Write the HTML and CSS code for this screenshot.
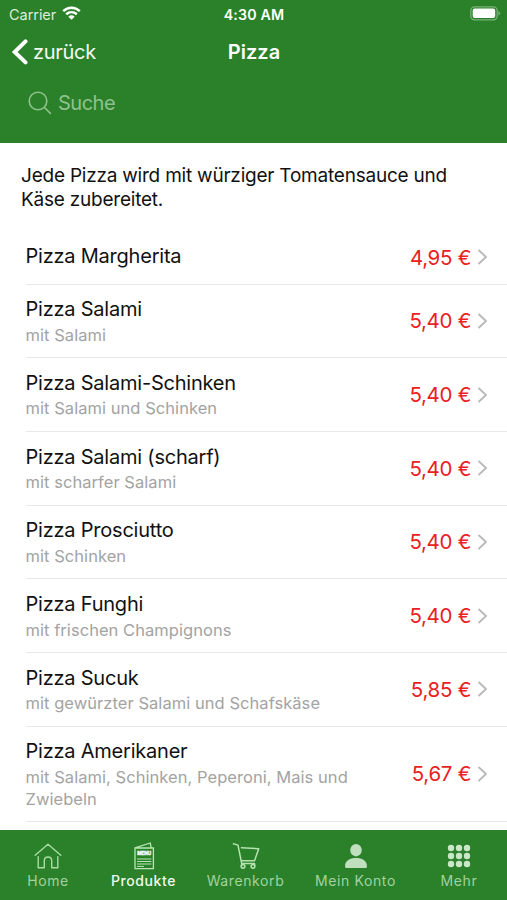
FILE: index.html
```html
<!DOCTYPE html>
<html lang="de">
<head>
<meta charset="utf-8">
<meta name="viewport" content="width=device-width, initial-scale=1">
<title>Pizza</title>
<link rel="stylesheet" href="styles.css">
</head>
<body>
<div class="app">
  <header class="header">
    <div class="status">
      <div class="carrier"><span>Carrier</span>
        <svg class="wifi" width="19" height="14" viewBox="0 0 19 14" fill="none" stroke="#fff" stroke-width="2.5"><path d="M1.2 5.2C6 .6 13 .6 17.8 5.2M4.2 8.3C7.4 5.4 11.6 5.4 14.8 8.3"/><path d="M9.5 13.8 6.3 10.7Q9.5 8 12.7 10.7Z" fill="#fff" stroke="none"/></svg>
      </div>
      <div class="clock">4:30 AM</div>
      <svg class="battery" width="31" height="15" viewBox="0 0 31 15"><rect x=".8" y=".8" width="26.4" height="13" rx="3.8" fill="none" stroke="#79b178" stroke-width="1.3"/><rect x="2.7" y="2.6" width="22.5" height="9.4" rx="2" fill="#fff"/><path d="M28.4 5v4.6q1.7-.8 1.7-2.3t-1.7-2.3" fill="#79b178"/></svg>
    </div>
    <div class="nav">
      <div class="back">
        <svg width="17" height="26" viewBox="0 0 17 26" fill="none" stroke="#fff" stroke-width="4" stroke-linecap="round"><path d="M14.5 2.4 3.7 13 14.5 23.4"/></svg>
        <span>zurück</span>
      </div>
      <h1 class="title">Pizza</h1>
    </div>
    <div class="search">
      <svg width="24" height="24" viewBox="0 0 24 24" fill="none" stroke="#8fc18e" stroke-width="1.6" stroke-linecap="round"><circle cx="10" cy="10" r="8.8"/><path d="m16.4 16.5 6 5.9"/></svg>
      <span>Suche</span>
    </div>
  </header>
  <main class="content">
    <p class="intro">Jede Pizza wird mit würziger Tomatensauce und Käse zubereitet.</p>
    <ul class="list">
      <li class="row plain"><div><div class="name">Pizza Margherita</div></div><div class="price">4,95 €</div><svg class="chevron" viewBox="0 0 10 16"><path d="m1 1 7.5 7L1 15"/></svg></li>
      <li class="row"><div><div class="name">Pizza Salami</div><div class="desc">mit Salami</div></div><div class="price">5,40 €</div><svg class="chevron" viewBox="0 0 10 16"><path d="m1 1 7.5 7L1 15"/></svg></li>
      <li class="row"><div><div class="name">Pizza Salami-Schinken</div><div class="desc">mit Salami und Schinken</div></div><div class="price">5,40 €</div><svg class="chevron" viewBox="0 0 10 16"><path d="m1 1 7.5 7L1 15"/></svg></li>
      <li class="row"><div><div class="name">Pizza Salami (scharf)</div><div class="desc">mit scharfer Salami</div></div><div class="price">5,40 €</div><svg class="chevron" viewBox="0 0 10 16"><path d="m1 1 7.5 7L1 15"/></svg></li>
      <li class="row"><div><div class="name">Pizza Prosciutto</div><div class="desc">mit Schinken</div></div><div class="price">5,40 €</div><svg class="chevron" viewBox="0 0 10 16"><path d="m1 1 7.5 7L1 15"/></svg></li>
      <li class="row"><div><div class="name">Pizza Funghi</div><div class="desc">mit frischen Champignons</div></div><div class="price">5,40 €</div><svg class="chevron" viewBox="0 0 10 16"><path d="m1 1 7.5 7L1 15"/></svg></li>
      <li class="row"><div><div class="name">Pizza Sucuk</div><div class="desc">mit gewürzter Salami und Schafskäse</div></div><div class="price">5,85 €</div><svg class="chevron" viewBox="0 0 10 16"><path d="m1 1 7.5 7L1 15"/></svg></li>
      <li class="row"><div><div class="name">Pizza Amerikaner</div><div class="desc">mit Salami, Schinken, Peperoni, Mais und<br>Zwiebeln</div></div><div class="price">5,67 €</div><svg class="chevron" viewBox="0 0 10 16"><path d="m1 1 7.5 7L1 15"/></svg></li>
    </ul>
  </main>
  <nav class="tabs">
    <div class="tab">
      <svg width="28" height="28" viewBox="0 0 28 28" fill="none" stroke="#a9dca5" stroke-width="1.4" stroke-linejoin="round" stroke-linecap="round"><path d="M1.2 13.3 14 2.2l12.8 11.1M4.2 14.6v11.2h6.1v-7.2q0-3.6 3.7-3.6t3.7 3.6v7.2h6.1V14.6"/></svg>
      <span>Home</span>
    </div>
    <div class="tab active">
      <svg width="28" height="28" viewBox="0 0 28 28" fill="none" stroke="#b9e6b5" stroke-width="1.3"><path d="M5 6h18.4v20.7H5zM5 5.8 20.3 1l.8 4.8"/><path d="M7 17h14.4M7 19.5h14.4M7 22h14.4M7 24.4h7" stroke-width="1"/><text class="menu-word" x="14.2" y="12.8">MENU</text></svg>
      <span>Produkte</span>
    </div>
    <div class="tab">
      <svg width="28" height="28" viewBox="0 0 28 28" fill="none" stroke="#b5e2b1" stroke-width="1.5" stroke-linejoin="round" stroke-linecap="round"><path d="M1.5 1.8 6 3.1l3.7 18.4V24M9.5 5.8l17.2.9-4.2 12.1H9.4M9.7 21.5H22.5V24"/><circle cx="11" cy="24.3" r="1.9"/><circle cx="21" cy="24.3" r="1.9"/></svg>
      <span>Warenkorb</span>
    </div>
    <div class="tab">
      <svg width="28" height="28" viewBox="0 0 28 28" fill="#c0dfbf"><ellipse cx="14" cy="8.2" rx="5.7" ry="6.2"/><path d="M3 24.2c0-5.6 5-8.2 11-8.2s11 2.6 11 8.2q0 1.9-1.8 1.9H4.8q-1.8 0-1.8-1.9"/></svg>
      <span>Mein Konto</span>
    </div>
    <div class="tab">
      <svg width="28" height="28" viewBox="0 0 28 28" fill="#c9e8c7"><circle cx="6" cy="6" r="3.2"/><circle cx="14" cy="6" r="3.2"/><circle cx="22" cy="6" r="3.2"/><circle cx="6" cy="14" r="3.2"/><circle cx="14" cy="14" r="3.2"/><circle cx="22" cy="14" r="3.2"/><circle cx="6" cy="22" r="3.2"/><circle cx="14" cy="22" r="3.2"/><circle cx="22" cy="22" r="3.2"/></svg>
      <span>Mehr</span>
    </div>
  </nav>
</div>
</body>
</html>
```
FILE: styles.css
```css
* { box-sizing: border-box; }
body { margin: 0; background: #fff; font-family: Inter, "Liberation Sans", sans-serif; color: #111; }
.app { display: flex; flex-direction: column; height: 900px; overflow: hidden; }
.header { flex: none; height: 142.5px; background: #2a8129; color: #fff; }
.status { display: grid; grid-template-columns: 1fr auto 1fr; align-items: center; height: 28px; padding: 0 6px 0 8px; font-size: 14.5px; }
.carrier { display: flex; align-items: center; gap: 6px; padding-left: 1px; color: #dcecdc; letter-spacing: -0.05px; }
.wifi { margin-top: -2px; }
.clock { font-weight: 600; font-size: 14.2px; letter-spacing: 0.2px; margin-left: -1px; }
.battery { justify-self: end; margin-top: -1px; }
.nav { display: grid; grid-template-columns: 1fr auto 1fr; align-items: center; height: 48px; padding: 0 10px 0 11px; }
.back { display: flex; align-items: center; gap: 5px; font-size: 20px; letter-spacing: -0.3px; color: #f3faf3; }
.title { margin: 0; font-size: 20px; font-weight: 600; }
.search { display: flex; align-items: center; gap: 6px; height: 53px; padding-left: 28px; font-size: 20px; letter-spacing: -0.5px; color: #8fc18e; }
.content { flex: 1; min-height: 0; overflow: hidden; }
.intro { margin: 0; padding: 21px 50px 17.5px 21px; font-size: 19px; line-height: 24.5px; letter-spacing: -0.22px; }
.list { list-style: none; margin: 0; padding: 0 0 0 25.5px; }
.row { display: grid; grid-template-columns: 1fr auto 11px; column-gap: 6px; align-items: center; min-height: 73.7px; padding: 10.5px 19px 11.2px 0; border-bottom: 1.5px solid #e8e8e8; }
.plain { min-height: 54.5px; padding-top: 9px; padding-bottom: 9px; }
.name { font-size: 20px; line-height: 29px; letter-spacing: -0.22px; white-space: nowrap; }
.desc { margin-top: -0.5px; font-size: 16.5px; line-height: 22px; letter-spacing: 0.05px; color: #a3a3a3; white-space: nowrap; }
.price { margin-top: 1.5px; font-size: 20.5px; line-height: 24px; letter-spacing: -0.3px; color: #e9211f; white-space: nowrap; }
.chevron { width: 11px; height: 16px; margin-top: 1px; fill: none; stroke: #b8b8b8; stroke-width: 1.8; }
.tabs { flex: none; display: grid; grid-template-columns: 96px 95px 109px 111px 96px; height: 70px; background: #2a8129; }
.tab { display: flex; flex-direction: column; align-items: center; padding-top: 12px; color: #a3d19f; font-size: 14px; line-height: 20px; letter-spacing: 0.6px; gap: 1px; white-space: nowrap; }
.active { color: #eefbed; font-weight: 500; }
.menu-word { font: 800 4.6px Inter, sans-serif; fill: #fff; stroke: #fff; stroke-width: 0.3px; text-anchor: middle; letter-spacing: 0; }
```
